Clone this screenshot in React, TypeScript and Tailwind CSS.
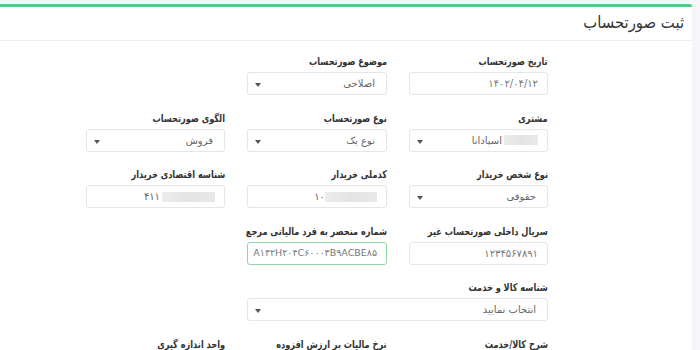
const font = { fontFamily: '"DejaVu Sans", "Noto Sans", sans-serif' };

const Arrow = () => (
  <span className="absolute left-[7px] top-[10px] h-0 w-0 border-x-[3px] border-t-[4px] border-x-transparent border-t-[#555]" />
);

const Mask = ({ w }: { w: number }) => (
  <span className="inline-block h-[10px] bg-gradient-to-l from-[#e9e9e9] via-[#e4e4e4] to-[#ececec]" style={{ width: w }} />
);

// DejaVu's Arabic is wider than the original web font, so labels are squeezed a bit
const Label = ({ children }: { children: React.ReactNode }) => (
  <div className="mb-[3px] h-[18px] whitespace-nowrap leading-[18px]">
    <span className="inline-block origin-right scale-x-[0.78] text-[10.5px] font-bold text-[#333]">{children}</span>
  </div>
);

type FieldProps = {
  label: string;
  children?: React.ReactNode;
  select?: boolean;
  focus?: boolean;
  span?: boolean;
};

const Field = ({ label, children, select, focus, span }: FieldProps) => (
  <div className={span ? 'col-span-2' : ''}>
    <Label>{label}</Label>
    <div
      className={`relative flex h-[23px] items-center overflow-hidden rounded-[3px] border bg-white pr-[9px] text-[10px] text-[#666] ${
        focus ? 'border-[#8fd6a9]' : 'border-[#e3e6ea]'
      }`}
    >
      {children}
      {select && <Arrow />}
    </div>
  </div>
);

const Empty = () => <div />;

export default function App() {
  return (
    <div className="min-h-screen bg-[#f4f6f9] pt-[4px]" style={font} dir="rtl">
      <div className="mr-[8px] w-[692px] rounded-tr-[2px] border-t-[3px] border-[#55c98c] bg-white">
        <div className="flex h-[34px] items-center border-b border-[#eeeeee] pr-[8px]">
          <h1 className="inline-block origin-right scale-x-[0.9] text-[16.5px] font-normal text-[#333]">ثبت صورتحساب</h1>
        </div>
        <div className="grid grid-cols-[139px_140px_139px] gap-x-[22px] gap-y-[12.6px] pr-[144px] pt-[10px]">
          <Field label="تاریخ صورتحساب">
            <span className="text-[#777]">۱۴۰۲/۰۴/۱۲</span>
          </Field>
          <Field label="موضوع صورتحساب" select>
            <span className="pr-[2px]">اصلاحی</span>
          </Field>
          <Empty />

          <Field label="مشتری" select>
            <span className="flex items-center gap-[2px]">
              <Mask w={34} />
              <span>اسپادانا</span>
            </span>
          </Field>
          <Field label="نوع صورتحساب" select>
            <span className="pr-[2px]">نوع یک</span>
          </Field>
          <Field label="الگوی صورتحساب" select>
            <span className="pr-[2px]">فروش</span>
          </Field>

          <Field label="نوع شخص خریدار" select>
            <span className="pr-[2px]">حقوقی</span>
          </Field>
          <Field label="کدملی خریدار">
            <span className="flex items-center" dir="ltr">
              <span>۱۰</span>
              <Mask w={52} />
            </span>
          </Field>
          <Field label="شناسه اقتصادی خریدار">
            <span className="flex items-center" dir="ltr">
              <span className="mr-[2px]">۴۱۱</span>
              <Mask w={53} />
            </span>
          </Field>

          <Field label="سریال داخلی صورتحساب غیر">
            <span className="text-[#777]">۱۲۳۴۵۶۷۸۹۱</span>
          </Field>
          <Field label="شماره منحصر به فرد مالیاتی مرجع" focus>
            <span className="text-[9.5px] text-[#777]">A۱۴۲H۲۰۴C۶۰۰۰۳B۹ACBE۸۵</span>
          </Field>
          <Empty />

          <Field label="شناسه کالا و خدمت" select span>
            <span className="pr-[2px]">انتخاب نمایید</span>
          </Field>
          <Empty />

          <Label>شرح کالا/خدمت</Label>
          <Label>نرخ مالیات بر ارزش افزوده</Label>
          <Label>واحد اندازه گیری</Label>
        </div>
        <div className="h-[40px]" />
      </div>
    </div>
  );
}
